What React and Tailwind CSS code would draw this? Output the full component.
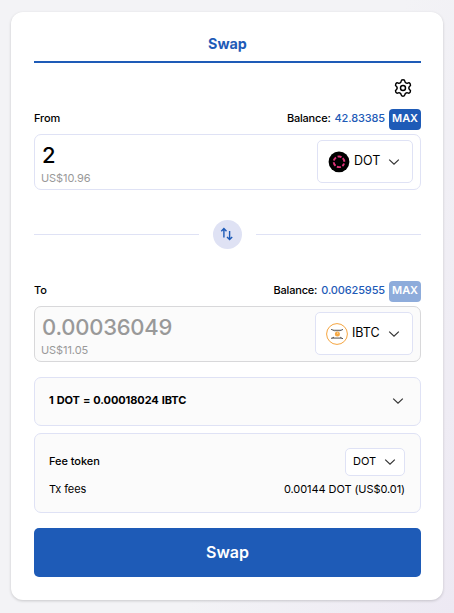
import { Settings } from "lucide-react";

function Chevron({ className = "" }) {
  return (
    <svg className={className} width="12" height="8" viewBox="0 0 12 8" fill="none" stroke="#333" strokeWidth="1.2">
      <path d="M1.2 1.6 6 6.2l4.8-4.6" />
    </svg>
  );
}

function DotIcon() {
  return (
    <svg width="22" height="22" viewBox="0 0 22 22" fill="none">
      <circle cx="11" cy="10.8" r="10.4" fill="#000" />
      <circle cx="11" cy="10.8" r="5.3" stroke="#e0337a" strokeWidth="1.9" strokeDasharray="3.9 1.65" strokeDashoffset="1.95" transform="rotate(30 11 10.8)" />
    </svg>
  );
}

function IbtcIcon() {
  return (
    <svg width="22" height="22" viewBox="0 0 22 22" fill="none">
      <circle cx="11" cy="11" r="10.4" fill="#fff" stroke="#f5a540" strokeWidth="1" />
      <path d="M5 6.3h9.5l2.5 1.4H8.2z" fill="#ccc" />
      <path d="M5 6.3 8.2 7.7H14l3-1.4" stroke="#444" strokeWidth=".8" />
      <path d="M8 14.2h6.2l2.8 1.9H5z" fill="#999" />
      <path d="M5 15.4 8 14.2m6.2 0 2.8 1.6" stroke="#333" strokeWidth=".8" />
      <circle cx="11.4" cy="10.9" r="2.5" fill="#f6a843" />
      <path d="M11.2 10.1h1" stroke="#fff" strokeWidth=".9" />
    </svg>
  );
}

function BalanceRow({ label, balance, disabled }) {
  return (
    <div className="flex h-[21px] items-start text-[11px] leading-[19px] font-medium">
      <span className="tracking-[-0.1px]">{label}</span>
      <span className="ml-auto tracking-[-0.2px]">Balance:</span>
      <span className="ml-1 tracking-[-0.13px] text-[#1e5bb7]">{balance}</span>
      <span className={`ml-1 h-[21px] w-8 rounded-[4px] text-center font-semibold tracking-[-0.1px] text-white ${disabled ? "bg-[#8eacdb]" : "bg-[#1e5bb7]"}`}>
        MAX
      </span>
    </div>
  );
}

function AmountBox({ amount, usd, token, icon, disabled }) {
  return (
    <div className={`mt-1 flex h-14 items-start justify-between rounded-[7px] border pt-[5px] pr-[7px] pl-[6px] ${disabled ? "border-[#d8d8da] bg-[#fbfbfb]" : "border-[#dfe2f5] bg-white"}`}>
      <div>
        <div className={`pt-px pl-px text-[22px] leading-7 font-medium tracking-[-0.23px] ${disabled ? "text-[#999]" : "text-black"}`}>{amount}</div>
        <div className="pt-px text-[11px] leading-4 tracking-[-0.08px] text-[#999]">{usd}</div>
      </div>
      <div className={`flex h-[43px] items-center rounded-[5px] border border-[#dfe2f5] bg-white pl-2.5 ${disabled ? "w-[98px]" : "w-24"}`}>
        {icon}
        <span className="ml-1 text-[12.5px]">{token}</span>
        <Chevron className="mr-3 ml-auto" />
      </div>
    </div>
  );
}

export default function App() {
  return (
    <main className="h-[613px] w-[454px] bg-[linear-gradient(110deg,#f3f3f6_60%,#ede9f3_100%)] pt-3 pl-[11px] font-['Inter',sans-serif] text-black">
      <section className="h-[588px] w-[432px] rounded-xl bg-white pr-[22px] pl-[23px] shadow-[0_1px_3px_rgba(0,0,0,0.18)]">
        <div className="flex h-[51px] items-end justify-center border-b-2 border-[#1e5bb7] pb-[7px] text-[14.3px] leading-5 font-bold text-[#1e5bb7]">
          Swap
        </div>
        <div className="flex h-[46px] justify-end pt-[15px] pr-[8.5px]">
          <Settings size={20} strokeWidth={1.75} />
        </div>
        <BalanceRow label="From" balance="42.83385" />
        <AmountBox amount="2" usd="US$10.96" token="DOT" icon={<DotIcon />} />
        <div className="flex h-[91px] items-center pb-[3px]">
          <div className="h-px w-[164.5px] bg-[#dfe2f5]" />
          <div className="mr-[14px] ml-[14px] flex size-[29px] items-center justify-center rounded-full bg-[#dfe2f4]">
            <svg width="14" height="14" viewBox="0 0 14 14" fill="none" stroke="#1e5bb7" strokeWidth="1.4">
              <path d="M3.9 10.4V1.8M1.3 4.2l2.6-2.6 2.6 2.6M9.6 4v8.4M7 10l2.6 2.6 2.6-2.6" />
            </svg>
          </div>
          <div className="h-px flex-1 bg-[#dfe2f5]" />
        </div>
        <BalanceRow label="To" balance="0.00625955" disabled />
        <AmountBox amount="0.00036049" usd="US$11.05" token="IBTC" icon={<IbtcIcon />} disabled />
        <div className="mt-[15px] flex h-[49px] items-center justify-between rounded-[7px] border border-[#dfe2f5] bg-[#fbfbfb] pr-4 pb-0.5 pl-[14px] text-[11px] font-bold">
          <span className="tracking-[-0.08px] [word-spacing:0.5px]">1 DOT = 0.00018024 IBTC</span>
          <Chevron />
        </div>
        <div className="mt-[7px] h-20 rounded-[7px] border border-[#dfe2f5] bg-[#fbfbfb] pt-[14px] pr-[15px] pl-[14px] text-[11px]">
          <div className="flex h-7 items-center justify-between">
            <span className="pb-0.5 font-medium tracking-[-0.05px]">Fee token</span>
            <div className="flex h-7 w-[60px] items-center justify-between rounded-[5px] border border-[#dfe2f5] bg-white pr-[8px] pl-[7px]">
              <span className="pb-px">DOT</span>
              <Chevron />
            </div>
          </div>
          <div className="flex h-7 items-center justify-between pb-0.5">
            <span className="tracking-[-0.1px]">Tx fees</span>
            <span className="tracking-[-0.08px]">0.00144 DOT (US$0.01)</span>
          </div>
        </div>
        <button className="mt-[15px] h-[49px] w-full rounded-[5px] bg-[#1e5bb7] pb-px text-[16px] font-semibold text-white">
          Swap
        </button>
      </section>
    </main>
  );
}
